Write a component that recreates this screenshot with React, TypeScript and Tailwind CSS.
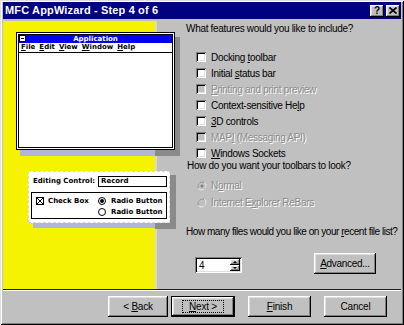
import React from "react";

const SANS = "font-['Liberation_Sans',Arial,sans-serif]";
const PIX = "font-['DejaVu_Sans',Verdana,sans-serif] font-bold";

const raised =
  "shadow-[inset_-1px_-1px_0_#000,inset_1px_1px_0_#fff,inset_-2px_-2px_0_#808080,inset_2px_2px_0_#dfdfdf]";
const sunken =
  "shadow-[inset_1px_1px_0_#808080,inset_-1px_-1px_0_#fff,inset_2px_2px_0_#000,inset_-2px_-2px_0_#dfdfdf]";
const etched = "text-[#8c8c8c] [text-shadow:1px_1px_0_#fff]";

function U({ children }: { children: React.ReactNode }) {
  return <span className="underline underline-offset-[1px]">{children}</span>;
}

function Check({ label, disabled }: { label: React.ReactNode; disabled?: boolean }) {
  return (
    <div className="flex items-center h-[16px]">
      <div className={`w-[10px] h-[10px] ${disabled ? "bg-[#c0c0c0]" : "bg-white"} ${sunken}`} />
      <span className={`ml-[5px] ${disabled ? etched : "text-black"}`}>{label}</span>
    </div>
  );
}

function Radio({ label, checked }: { label: React.ReactNode; checked?: boolean }) {
  return (
    <div className="flex items-center h-[17px]">
      <svg width="10" height="10" viewBox="0 0 10 10" className="ml-[1px]">
        <path d="M9 2.5A4.5 4.5 0 1 0 2.5 9" fill="none" stroke="#808080" />
        <path d="M1 7.5A4.5 4.5 0 1 0 7.5 1" fill="none" stroke="#fff" />
        <circle cx="5" cy="5" r="3.6" fill="#c0c0c0" />
        {checked && <circle cx="5" cy="5" r="1.5" fill="#808080" />}
      </svg>
      <span className={`ml-[4px] ${etched}`}>{label}</span>
    </div>
  );
}

function Btn({ children, w, def }: { children: React.ReactNode; w: string; def?: boolean }) {
  if (def) {
    return (
      <div className={`${w} h-[21px] border border-black`}>
        <div className={`w-full h-full bg-[#c0c0c0] ${raised} flex items-center justify-center`}>
          <span className="border border-dotted border-black px-[6px] leading-[11px]">{children}</span>
        </div>
      </div>
    );
  }
  return (
    <div className={`${w} h-[21px] bg-[#c0c0c0] ${raised} flex items-center justify-center`}>
      {children}
    </div>
  );
}

function Mini({ children }: { children: React.ReactNode }) {
  return <span className="underline underline-offset-[1px] decoration-[1px]">{children}</span>;
}

function AppPreview() {
  return (
    <>
      {/* shadows */}
      <div className="absolute left-[17px] top-[129px] w-[135px] h-[6px] bg-[#b4b4d8]" />
      <div className="absolute left-[152px] top-[129px] w-[25px] h-[6px] bg-[#8a8a8a]" />
      <div className="absolute left-[172px] top-[16px] w-[5px] h-[119px] bg-[#8a8a8a]" />
      <div className="absolute left-[13px] top-[11px] w-[159px] h-[118px] border border-black bg-white p-[1px]">
        <div className="w-full h-full border border-black flex flex-col">
          <div className="h-[8px] bg-[#0000f0] relative flex items-center justify-center">
            <div className="absolute left-[0px] top-[0px] w-[7px] h-[7px] bg-white border border-black flex items-center justify-center">
              <div className="w-[3px] h-[1px] bg-black" />
            </div>
            <span className={`${PIX} text-white text-[7px] leading-[8px]`}>Application</span>
          </div>
          <div className={`${PIX} h-[10px] border-b border-black text-[7px] leading-[9px] text-black flex gap-[4px] pl-[2px]`}>
            <span><Mini>F</Mini>ile</span>
            <span><Mini>E</Mini>dit</span>
            <span><Mini>V</Mini>iew</span>
            <span><Mini>W</Mini>indow</span>
            <span><Mini>H</Mini>elp</span>
          </div>
          <div className="flex-1 bg-white" />
        </div>
      </div>

      {/* editing control card */}
      <div className="absolute left-[30px] top-[202px] w-[122px] h-[5px] bg-[#b4b4d8]" />
      <div className="absolute left-[152px] top-[202px] w-[21px] h-[6px] bg-[#8a8a8a]" />
      <div className="absolute left-[167px] top-[154px] w-[6px] h-[54px] bg-[#8a8a8a]" />
      <div className={`absolute left-[25px] top-[150px] w-[142px] h-[52px] bg-white border border-dashed border-[#d8d8d8] ${PIX} text-[7px] text-black px-[2px] pt-[4px]`}>
        <div className="flex items-center h-[11px]">
          <span className="w-[67px] pl-[2px]">Editing Control:</span>
          <div className="w-[69px] h-[11px] border border-black flex items-center pl-[2px] leading-none">Record</div>
        </div>
        <div className="mt-[5px] w-[136px] h-[27px] border border-black flex pt-[4px] pl-[4px]">
          <div className="w-[62px] flex items-start">
            <div className="w-[8px] h-[8px] border border-black relative">
              <svg width="6" height="6" viewBox="0 0 6 6" className="absolute left-0 top-0">
                <path d="M0 0L6 6M6 0L0 6" stroke="#000" strokeWidth="1" />
              </svg>
            </div>
            <span className="ml-[4px] leading-[8px]">Check Box</span>
          </div>
          <div className="flex flex-col gap-[3px]">
            <div className="flex items-center h-[8px]">
              <div className="w-[8px] h-[8px] rounded-full border border-black flex items-center justify-center">
                <div className="w-[4px] h-[4px] rounded-full bg-black" />
              </div>
              <span className="ml-[5px]">Radio Button</span>
            </div>
            <div className="flex items-center h-[8px]">
              <div className="w-[8px] h-[8px] rounded-full border border-black" />
              <span className="ml-[5px]">Radio Button</span>
            </div>
          </div>
        </div>
      </div>
    </>
  );
}

export default function App() {
  return (
    <div
      className={`w-[404px] h-[325px] bg-[#c0c0c0] flex flex-col pt-[2px] px-[3px] ${SANS} shadow-[inset_1px_1px_0_#dfdfdf,inset_-1px_-1px_0_#000,inset_2px_2px_0_#fff,inset_-2px_-2px_0_#808080]`}
    >
      {/* title bar */}
      <div className="h-[17px] bg-[#000080] flex items-center pl-[2px] pr-[1px]">
        <span className="text-white font-bold text-[11px] tracking-[0.15px]">MFC AppWizard - Step 4 of 6</span>
        <div className="ml-auto flex gap-[2px]">
          <div className={`w-[14px] h-[12px] bg-[#c0c0c0] ${raised} flex items-center justify-center text-[10px] font-bold leading-none text-black`}>?</div>
          <div className={`w-[14px] h-[12px] bg-[#c0c0c0] ${raised} flex items-center justify-center`}>
            <svg width="8" height="7" viewBox="0 0 8 7">
              <path d="M0.5 0.5L7.5 6.5M7.5 0.5L0.5 6.5" stroke="#000" strokeWidth="1.6" />
            </svg>
          </div>
        </div>
      </div>

      {/* body */}
      <div className="mt-[2px] h-[268px] flex relative">
        <div className="w-[152px] shrink-0 bg-[#f6f300]" />
        <div className="w-[2px] shrink-0 bg-[#d8d8d8]" />
        <div className="flex-1 min-w-0 flex flex-col text-[10px] tracking-[-0.3px] text-black whitespace-nowrap">
          <div className="h-[14px] mt-[1px] pl-[29px] leading-[14px]">What features would you like to include?</div>
          <div className="mt-[13px] pl-[39px] flex flex-col">
            <Check label={<>Docking <U>t</U>oolbar</>} />
            <Check label={<>Initial <U>s</U>tatus bar</>} />
            <Check disabled label={<><U>P</U>rinting and print preview</>} />
            <Check label={<>Context-sensitive He<U>l</U>p</>} />
            <Check label={<><U>3</U>D controls</>} />
            <Check disabled label={<>MAP<U>I</U> (Messaging API)</>} />
            <Check label={<><U>W</U>indows Sockets</>} />
          </div>
          <div className="mt-[-1px] h-[12px] pl-[30px] leading-[12px]">How do you want your toolbars to look?</div>
          <div className="mt-[5px] pl-[39px] flex flex-col">
            <Radio checked label={<>N<U>o</U>rmal</>} />
            <Radio label={<>Internet E<U>x</U>plorer ReBars</>} />
          </div>
          <div className="mt-[15px] h-[12px] pl-[29px] leading-[12px] tracking-[-0.45px]">
            How many files would you like on your <U>r</U>ecent file list?
          </div>
          <div className="mt-[15px] pl-[38px] flex items-start">
            <div className={`mt-[4px] w-[47px] h-[16px] bg-white ${sunken} flex items-center pl-[4px] pr-[2px]`}>
              <span className="flex-1">4</span>
              <div className="w-[10px] h-[12px] flex flex-col">
                <div className={`h-[6px] bg-[#c0c0c0] ${raised} flex items-center justify-center`}>
                  <div className="w-0 h-0 border-l-[2px] border-r-[2px] border-b-[2px] border-l-transparent border-r-transparent border-b-black" />
                </div>
                <div className={`h-[6px] bg-[#c0c0c0] ${raised} flex items-center justify-center`}>
                  <div className="w-0 h-0 border-l-[2px] border-r-[2px] border-t-[2px] border-l-transparent border-r-transparent border-t-black" />
                </div>
              </div>
            </div>
            <div className="ml-[72px]">
              <Btn w="w-[62px]"><span><U>A</U>dvanced...</span></Btn>
            </div>
          </div>
        </div>
        <AppPreview />
      </div>

      {/* separator */}
      <div className="h-[1px] bg-[#202020]" />
      <div className="h-[1px] bg-white" />

      {/* buttons */}
      <div className="mt-[5px] flex pl-[105px] text-[10px] tracking-[-0.2px] text-black">
        <Btn w="w-[60px]"><span>&lt; <U>B</U>ack</span></Btn>
        <div className="ml-[3px]">
          <Btn w="w-[64px]" def><span><U>N</U>ext &gt;</span></Btn>
        </div>
        <div className="ml-[13px]">
          <Btn w="w-[63px]"><span><U>F</U>inish</span></Btn>
        </div>
        <div className="ml-[13px]">
          <Btn w="w-[63px]"><span>Cancel</span></Btn>
        </div>
      </div>
    </div>
  );
}
